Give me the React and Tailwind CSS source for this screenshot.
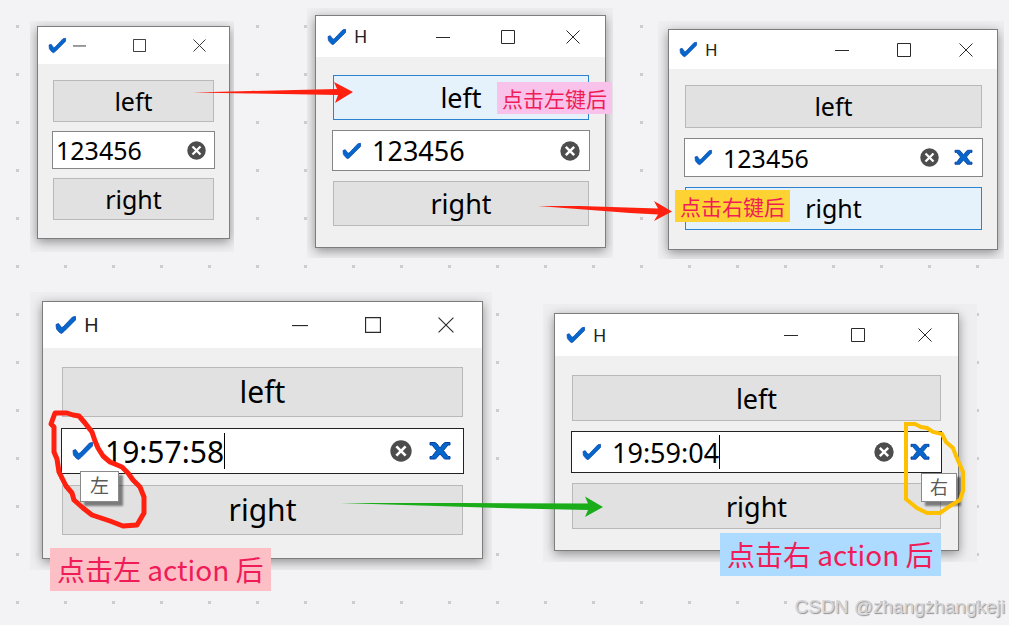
import { useState } from 'react'

const windows = [
  {
    id: 'start',
    title: '',
    value: '123456',
    frame: 'left-[30px] top-[21px] w-[204px] pt-[5px] pr-1 pb-[13px] pl-[7px]',
    bar: 'h-[37px] pl-[10px]',
    cell: 'w-[60px]',
    glyph: 'size-[13px]',
    appIcon: 'h-[17px] w-[19px]',
    titleText: 'text-[17px]',
    body: 'gap-[9px] px-[14px] pt-4 pb-[18px]',
    button: 'h-[42px] text-[25px]',
    field: 'h-[38px] gap-[10px] pl-[3px] pr-2 text-[25px]',
    clear: 'size-[19px]',
  },
  {
    id: 'left-clicked',
    title: 'H',
    value: '123456',
    leftAction: true,
    active: 'left',
    frame: 'left-[307px] top-[8px] w-[306px] pt-[7px] pr-[7px] pb-[10px] pl-2',
    bar: 'h-[41px] pl-[11px]',
    cell: 'w-[65px]',
    glyph: 'size-[14px]',
    appIcon: 'h-[18px] w-5',
    titleText: 'text-[18px]',
    body: 'gap-[10px] pl-4 pr-[15px] pt-[18px] pb-[21px]',
    button: 'h-[45px] text-[27px]',
    field: 'h-[41px] gap-[10px] px-[9px] text-[27px]',
    clear: 'size-5',
  },
  {
    id: 'right-clicked',
    title: 'H',
    value: '123456',
    leftAction: true,
    rightAction: true,
    active: 'right',
    frame: 'left-[658px] top-[21px] w-[346px] pt-2 pr-[6px] pb-[9px] pl-[10px]',
    bar: 'h-[39px] pl-[10px]',
    cell: 'w-[62px]',
    glyph: 'size-[14px]',
    appIcon: 'h-[17px] w-[19px]',
    titleText: 'text-[17px]',
    body: 'gap-[10px] pl-[15px] pr-[14px] pt-4 pb-[19px]',
    button: 'h-[43px] text-[25px]',
    field: 'h-[39px] gap-[10px] px-[9px] text-[25px]',
    clear: 'size-[19px]',
    actionGap: 'ml-[5px]',
  },
  {
    id: 'left-action',
    title: 'H',
    value: '19:57:58',
    leftAction: true,
    rightAction: true,
    focused: true,
    frame: 'left-[30px] top-[292px] w-[462px] pt-[9px] pr-[9px] pb-[11px] pl-3',
    bar: 'h-[46px] pl-3',
    cell: 'w-[73px]',
    glyph: 'size-4',
    appIcon: 'h-5 w-[22px]',
    titleText: 'text-[20px]',
    body: 'gap-[11px] px-[18px] pt-[19px] pb-[23px]',
    button: 'h-[50px] text-[30px]',
    field: 'h-[46px] gap-[11px] pl-[10px] pr-3 text-[30px]',
    clear: 'size-[22px]',
    actionGap: 'ml-[6px]',
  },
  {
    id: 'right-action',
    title: 'H',
    value: '19:59:04',
    leftAction: true,
    rightAction: true,
    focused: true,
    frame: 'left-[543px] top-[304px] w-[434px] pt-[9px] pr-[18px] pb-[11px] pl-[11px]',
    bar: 'h-[42px] pl-[11px]',
    cell: 'w-[67px]',
    glyph: 'size-[14px]',
    appIcon: 'h-[18px] w-5',
    titleText: 'text-[18px]',
    body: 'gap-[10px] px-4 pt-[19px] pb-[21px]',
    button: 'h-[46px] text-[27px]',
    field: 'h-[42px] gap-[10px] pl-[10px] pr-[11px] text-[27px]',
    clear: 'size-5',
    actionGap: 'ml-[6px]',
  },
]

const notes = [
  {
    text: '点击左键后',
    className: 'left-[497px] top-[82px] bg-[#f9c2ea] px-[5px] text-[21px] leading-8',
  },
  {
    text: '点击右键后',
    className: 'left-[675px] top-[190px] bg-[#ffd234] px-[5px] text-[21px] leading-8',
  },
  {
    text: '点击左 action 后',
    className: 'left-[50px] top-[548px] bg-[#fcbfc6] px-[7px] text-[28px] leading-[43px]',
  },
  {
    text: '点击右 action 后',
    className: 'left-[720px] top-[533px] bg-[#addbff] px-[7px] text-[28px] leading-[43px]',
  },
]

const CheckIcon = ({ className }) => (
  <svg className={className} viewBox="0 0 22 20" aria-hidden="true">
    <path
      d="M1 9.5 L3.5 8.5 L6.5 12.5 L8 12 L17.5 2 L20.5 1.5 L20.5 5 L9 16.5 L6.5 18.5 L4.5 17.5 L1.5 14 Z"
      fill="#0566cc"
      stroke="#0b45ac"
      strokeWidth="0.8"
      strokeLinejoin="round"
    />
  </svg>
)

const CrossIcon = ({ className }) => (
  <svg className={className} viewBox="0 0 22 20" aria-hidden="true">
    <path
      d="M1 1.5 H6 L8 3 L11 7 L14 3 L16 1.5 H21 V4 H19 L14.5 9.5 L19 15.5 H21 V18 H15.5 L11 13 L6.5 18 H1 V15.5 H3 L7.5 9.5 L3 4 H1 Z"
      fill="#0566cc"
      stroke="#0b3f9f"
      strokeWidth="1"
    />
  </svg>
)

const ClearIcon = ({ className }) => (
  <svg className={className} viewBox="0 0 20 20" aria-hidden="true">
    <circle cx="10" cy="10" r="9.7" fill="#4d4d4d" />
    <path d="M5.8 5.8 L14.2 14.2 M14.2 5.8 L5.8 14.2" stroke="#fff" strokeWidth="2.4" />
  </svg>
)

const captionPaths = {
  Minimize: 'M0 7.5 H14',
  Maximize: 'M0.5 0.5 H13.5 V13.5 H0.5 Z',
  Close: 'M0.5 0.5 L13.5 13.5 M13.5 0.5 L0.5 13.5',
}

const TitleBar = ({ win }) => (
  <div className={`flex bg-white ${win.bar}`}>
    <div className="flex min-w-0 flex-1 items-center gap-[7px]">
      <CheckIcon className={`shrink-0 ${win.appIcon}`} />
      <span className={`text-[#222] ${win.titleText}`}>{win.title}</span>
    </div>
    {Object.entries(captionPaths).map(([name, d]) => (
      <button key={name} type="button" aria-label={name} className={`flex shrink-0 items-center justify-center ${win.cell}`}>
        <svg className={win.glyph} viewBox="0 0 14 14" fill="none" stroke="#2a2a2a" strokeWidth="1">
          <path d={d} />
        </svg>
      </button>
    ))}
  </div>
)

const PushButton = ({ win, name }) => (
  <button
    type="button"
    className={`mx-px flex items-center justify-center border leading-none ${win.button} ${
      win.active === name ? 'border-[#2b83cf] bg-[#e5f1fb]' : 'border-[#b9b9b9] bg-[#e1e1e1]'
    }`}
  >
    {name}
  </button>
)

const LineEdit = ({ win }) => {
  const [value, setValue] = useState(win.value)

  return (
    <div className={`flex items-center border bg-white ${win.field} ${win.focused ? 'border-[#222]' : 'border-[#858585]'}`}>
      {win.leftAction && (
        <button type="button" aria-label="左" className="shrink-0">
          <CheckIcon className={win.appIcon} />
        </button>
      )}
      <div className="flex h-full min-w-0 flex-1 items-center">
        <input
          type="text"
          aria-label="value"
          value={value}
          onChange={(e) => setValue(e.target.value)}
          className="h-full max-w-full [field-sizing:content] bg-transparent outline-none"
        />
        {win.focused && <span className="h-5/6 w-px shrink-0 bg-black"></span>}
      </div>
      <button type="button" aria-label="clear" className="shrink-0" onClick={() => setValue('')}>
        <ClearIcon className={win.clear} />
      </button>
      {win.rightAction && (
        <button type="button" aria-label="右" className={`shrink-0 ${win.actionGap}`}>
          <CrossIcon className={win.appIcon} />
        </button>
      )}
    </div>
  )
}

const AppWindow = ({ win }) => (
  <div className={`absolute overflow-hidden bg-[#eeeef0] ${win.frame}`}>
    <section className="border border-[#7d7d7d] bg-[#f0f0f0] shadow-[0_3px_10px_rgba(0,0,0,0.4)]">
      <TitleBar win={win} />
      <div className={`flex flex-col ${win.body}`}>
        <PushButton win={win} name="left" />
        <LineEdit win={win} />
        <PushButton win={win} name="right" />
      </div>
    </section>
  </div>
)

// Hand drawn arrows and circles on top of the windows
const Ink = () => (
  <svg className="pointer-events-none absolute inset-0 h-full w-full" aria-hidden="true">
    <g fill="#ff2010">
      <path d="M193 92.5 L250 91 L337 89 L334 82 L353 92 L335 103 L338 95 L250 93.5 Z" />
      <path d="M538 206 L580 206 L658 208.5 L654 201 L672 211.5 L654 221 L658 214.5 L630 213 Z" />
    </g>
    <path d="M340 503 L460 503 L588 503.5 L585 496.5 L603 507 L585 517 L588 510 L500 508 Z" fill="#1aad19" />
    <path
      d="M51 424 L55 413 L67 413 L73 415 L79 416 L85 423 L92 432 L95 441 L98 448 L103 456 L110 462 L122 467 L128 473 L133 480 L140 487 L144 497 L144 513 L137 525 L123 526 L110 521 L92 515 L83 508 L74 500 L72 493 L66 486 L59 472 L57 459 L54 452 L54 427 Z"
      fill="none"
      stroke="#ff2010"
      strokeWidth="5"
      strokeLinejoin="round"
    />
    <path
      d="M906 424 L915 424 L921 427 L927 428 L933 432 L942 434 L946 442 L953 448 L956 456 L963 472 L963 491 L960 500 L950 506 L940 513 L927 513 L917 508 L906 499 Z"
      fill="none"
      stroke="#ffc000"
      strokeWidth="4"
    />
  </svg>
)

const App = () => {
  return (
    <main className="relative min-h-screen w-full overflow-hidden bg-[#f3f3f5] font-['Noto_Sans','Noto_Sans_CJK_SC',sans-serif] text-black">
      {/* Dotted canvas */}
      <svg className="absolute inset-0 h-full w-full" aria-hidden="true">
        <defs>
          <pattern id="dots" x="16" y="25" width="48" height="48" patternUnits="userSpaceOnUse">
            <rect width="3" height="3" fill="#cdcdcf" />
          </pattern>
        </defs>
        <rect width="100%" height="100%" fill="url(#dots)" />
      </svg>

      {windows.map((win) => (
        <AppWindow key={win.id} win={win} />
      ))}

      {/* Tooltips */}
      <div
        role="tooltip"
        className="absolute left-[80px] top-[471px] border border-[#8a8a8a] bg-white px-[9px] text-[19px] leading-[29px] text-[#5a5a5a] shadow-[4px_4px_2px_rgba(0,0,0,0.45)]"
      >
        左
      </div>
      <div
        role="tooltip"
        className="absolute left-[921px] top-[473px] border border-[#8a8a8a] bg-white px-2 text-[18px] leading-[27px] text-[#5a5a5a] shadow-[4px_4px_2px_rgba(0,0,0,0.45)]"
      >
        右
      </div>

      <Ink />

      {notes.map((note) => (
        <p
          key={note.text}
          className={`absolute whitespace-nowrap font-['Noto_Sans_CJK_SC',sans-serif] text-[#f01c58] ${note.className}`}
        >
          {note.text}
        </p>
      ))}

      <p className="absolute right-1 bottom-1 font-['Liberation_Sans',sans-serif] text-[19px] leading-7 text-[#d6d6d8] [text-shadow:1px_1px_1px_#8f8f91]">
        CSDN @zhangzhangkeji
      </p>
    </main>
  )
}

export default App
